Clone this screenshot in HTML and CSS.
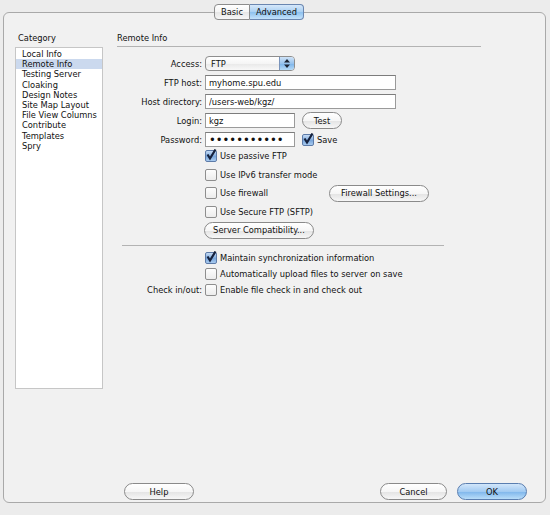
FILE: index.html
```html
<!DOCTYPE html>
<html>

<head>
    <meta charset="utf-8">
    <title>Site Definition</title>
    <link rel="stylesheet" href="styles.css">
</head>

<body>

    <div class="tabs">
        <span class="tab">Basic</span><span class="tab tab_active">Advanced</span>
    </div>

    <div class="dialog">
        <div class="main">
            <div class="category">
                <div class="heading">Category</div>
                <ul class="cat_list">
                    <li>Local Info</li>
                    <li class="selected">Remote Info</li>
                    <li>Testing Server</li>
                    <li>Cloaking</li>
                    <li>Design Notes</li>
                    <li>Site Map Layout</li>
                    <li>File View Columns</li>
                    <li>Contribute</li>
                    <li>Templates</li>
                    <li>Spry</li>
                </ul>
            </div>

            <div class="panel">
                <div class="panel_title">Remote Info</div>

                <div class="fields">
                    <div class="row">
                        <label class="label_text">Access:</label>
                        <div class="select">
                            <span class="select_value">FTP</span>
                            <span class="select_arrow">
                                <svg width="6" height="9" viewBox="0 0 6 9"><path d="M0 3.5 L3 0 L6 3.5 Z M0 5.5 L3 9 L6 5.5 Z" fill="#1c2433"/></svg>
                            </span>
                        </div>
                    </div>
                    <div class="row">
                        <label class="label_text" for="fhost">FTP host:</label>
                        <input class="text_input text_wide" type="text" id="fhost" value="myhome.spu.edu">
                    </div>
                    <div class="row">
                        <label class="label_text" for="fdir">Host directory:</label>
                        <input class="text_input text_wide" type="text" id="fdir" value="/users-web/kgz/">
                    </div>
                    <div class="row">
                        <label class="label_text" for="flogin">Login:</label>
                        <input class="text_input text_short" type="text" id="flogin" value="kgz">
                        <button class="button button_test">Test</button>
                    </div>
                    <div class="row">
                        <label class="label_text" for="fpass">Password:</label>
                        <input class="text_input text_short text_password" type="password" id="fpass" value="kgzpassword">
                        <span class="option option_save"><span class="checkbox checked"><svg width="12" height="12" viewBox="0 0 12 12"><path d="M2.5 5.5 L5 9.5 L10.5 0.5" fill="none" stroke="#15213d" stroke-width="2.2"/></svg></span>Save</span>
                    </div>
                </div>

                <div class="options">
                    <div class="opt_row"><span class="option"><span class="checkbox checked"><svg width="12" height="12" viewBox="0 0 12 12"><path d="M2.5 5.5 L5 9.5 L10.5 0.5" fill="none" stroke="#15213d" stroke-width="2.2"/></svg></span>Use passive FTP</span></div>
                    <div class="opt_row"><span class="option"><span class="checkbox"></span>Use IPv6 transfer mode</span></div>
                    <div class="opt_row">
                        <span class="option option_fixed"><span class="checkbox"></span>Use firewall</span>
                        <button class="button button_firewall">Firewall Settings...</button>
                    </div>
                    <div class="opt_row"><span class="option"><span class="checkbox"></span>Use Secure FTP (SFTP)</span></div>
                    <div class="opt_row"><button class="button button_compat">Server Compatibility...</button></div>
                </div>

                <div class="separator"></div>

                <div class="sync">
                    <div class="sync_row"><span class="label_text"></span><span class="option"><span class="checkbox checked"><svg width="12" height="12" viewBox="0 0 12 12"><path d="M2.5 5.5 L5 9.5 L10.5 0.5" fill="none" stroke="#15213d" stroke-width="2.2"/></svg></span>Maintain synchronization information</span></div>
                    <div class="sync_row"><span class="label_text"></span><span class="option"><span class="checkbox"></span>Automatically upload files to server on save</span></div>
                    <div class="sync_row"><span class="label_text">Check in/out:</span><span class="option"><span class="checkbox"></span>Enable file check in and check out</span></div>
                </div>
            </div>
        </div>

        <div class="footer">
            <button class="button button_help">Help</button>
            <div class="footer_right">
                <button class="button button_cancel">Cancel</button>
                <button class="button button_ok">OK</button>
            </div>
        </div>
    </div>

</body>

</html>
```

FILE: styles.css
```css
        body {
            margin: 0;
            background: #ececec;
            font-family: "DejaVu Sans", sans-serif;
            font-size: 8.3px;
            color: #111;
        }

        .tabs {
            display: flex;
            justify-content: center;
            padding-top: 4px;
            padding-right: 32px;
            position: relative;
            z-index: 2;
        }

        .tab {
            height: 14px;
            line-height: 14px;
            padding: 0 6px;
            border: 1px solid #8c8c8c;
            background: linear-gradient(#ffffff, #f4f4f4 50%, #e6e6e6 51%, #f7f7f7);
            border-radius: 4px 0 0 4px;
        }

        .tab_active {
            border-left: none;
            border-radius: 0 4px 4px 0;
            border-color: #6a86b0;
            background: linear-gradient(#d6e8fa, #a9cff2 50%, #8cc0ee 51%, #c4e2fb);
        }

        .dialog {
            box-sizing: border-box;
            margin: -8px 4px 0 3px;
            height: 491px;
            border: 1px solid #a9a9a9;
            border-radius: 6px;
            background: #f1f1f1;
            display: flex;
            flex-direction: column;
        }

        .main {
            display: flex;
            padding-top: 18px;
            padding-left: 11px;
        }

        .heading {
            line-height: 14px;
            margin-left: 3px;
            margin-bottom: 2px;
        }

        .cat_list {
            list-style: none;
            margin: 0;
            padding: 1px 0 0 0;
            box-sizing: border-box;
            width: 88px;
            height: 342px;
            background: #fff;
            border: 1px solid #c6c6c6;
        }

        .cat_list li {
            line-height: 10.2px;
            padding-left: 6px;
            white-space: nowrap;
        }

        .cat_list .selected {
            background: #cbd9ee;
        }

        .panel {
            margin-left: 14px;
            width: 364px;
        }

        .panel_title {
            height: 15px;
            line-height: 14px;
            border-bottom: 1px solid #b3b3b3;
        }

        .fields {
            padding-top: 7px;
        }

        .row {
            display: flex;
            align-items: center;
            height: 19px;
        }

        .label_text {
            width: 85px;
            margin-right: 3px;
            text-align: right;
            white-space: nowrap;
            flex-shrink: 0;
        }

        .select {
            box-sizing: border-box;
            width: 90px;
            height: 15px;
            display: flex;
            align-items: center;
            justify-content: space-between;
            border: 1px solid #8e8e8e;
            border-radius: 4px;
            background: linear-gradient(#ffffff, #f5f5f5 50%, #e8e8e8 51%, #f8f8f8);
            overflow: hidden;
        }

        .select_value {
            padding-left: 5px;
        }

        .select_arrow {
            width: 14px;
            height: 100%;
            display: flex;
            align-items: center;
            justify-content: center;
            border-left: 1px solid #7a94bb;
            background: linear-gradient(#cfe3f8, #97c3ee 50%, #7bb3ea 51%, #b6dbf8);
        }

        .text_input {
            box-sizing: border-box;
            height: 15px;
            padding: 0 3px;
            border: 1px solid #9a9a9a;
            border-top-color: #7c7c7c;
            background: #fff;
            font-family: "DejaVu Sans", sans-serif;
            font-size: 8.3px;
            color: #111;
            outline: none;
        }

        .text_wide {
            width: 191px;
        }

        .text_short {
            width: 90px;
        }

        .text_password {
            font-size: 11.5px;
            letter-spacing: 0;
        }

        .button {
            box-sizing: border-box;
            height: 17px;
            padding: 0;
            border: 1px solid #8a8a8a;
            border-radius: 9px;
            background: linear-gradient(#ffffff, #f6f6f6 50%, #e3e3e3 51%, #f7f7f7);
            font-family: "DejaVu Sans", sans-serif;
            font-size: 8.3px;
            color: #111;
        }

        .button_test {
            width: 40px;
            margin-left: 7px;
        }

        .button_firewall {
            width: 100px;
        }

        .button_compat {
            width: 110px;
            margin-left: -1px;
        }

        .option {
            display: flex;
            align-items: center;
            white-space: nowrap;
        }

        .option_save {
            margin-left: 7px;
        }

        .option_fixed {
            width: 124px;
        }

        .checkbox {
            box-sizing: border-box;
            width: 12px;
            height: 12px;
            margin-right: 3px;
            border: 1px solid #8e8e8e;
            border-radius: 2px;
            background: linear-gradient(#fdfdfd, #ececec);
            display: flex;
            align-items: center;
            justify-content: center;
            overflow: visible;
        }

        .checkbox.checked {
            border-color: #5d7ba8;
            background: linear-gradient(#c6dcf5, #7aa7dc 55%, #a9cbf0);
        }

        .checkbox svg {
            margin-top: -2px;
            flex-shrink: 0;
        }

        .options {
            margin-top: -2px;
            padding-left: 88px;
        }

        .opt_row {
            display: flex;
            align-items: center;
            height: 18.5px;
        }

        .separator {
            margin: 5.5px 0 0 5px;
            width: 322px;
            border-top: 1px solid #b3b3b3;
        }

        .sync {
            margin-top: 4px;
        }

        .sync_row {
            display: flex;
            align-items: center;
            height: 16px;
        }

        .footer {
            margin-top: auto;
            display: flex;
            align-items: center;
            padding: 0 18px 2px 120px;
        }

        .footer_right {
            margin-left: auto;
            display: flex;
            gap: 10px;
        }

        .button_help {
            width: 70px;
        }

        .button_cancel {
            width: 67px;
        }

        .button_ok {
            width: 70px;
            border-color: #5a7eb0;
            background: linear-gradient(#d2e6fa, #a2cbf2 50%, #7db5eb 51%, #b9ddf9);
        }
```
